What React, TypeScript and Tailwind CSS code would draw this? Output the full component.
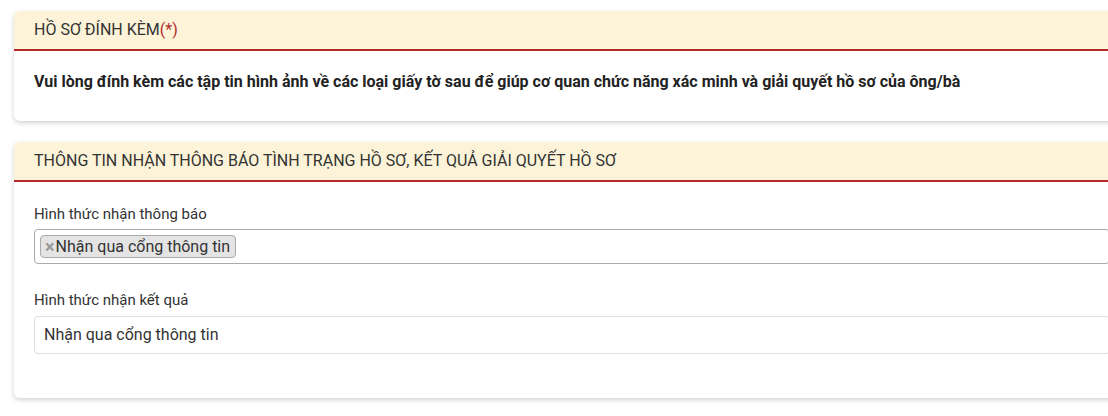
function SectionHeader({ children }: { children: React.ReactNode }) {
  return (
    <div className="h-[40px] flex items-center px-5 bg-[#fcf3d8] border-b-2 border-[#b52a2a] rounded-t-md text-[16px] text-[#333] uppercase">
      {children}
    </div>
  );
}

export default function App() {
  return (
    <div className="w-[1108px] h-[416px] overflow-hidden bg-white font-['Roboto',sans-serif]">
      <div className="w-[1130px] pl-[14px] pt-[11px]">
        <div className="rounded-md bg-white shadow-[0_2px_5px_rgba(0,0,0,0.18)]">
          <SectionHeader>
            Hồ sơ đính kèm<span className="text-[#b52a2a]">(*)</span>
          </SectionHeader>
          <div className="px-5 pt-[21px] h-[70px]">
            <p className="text-[16px] leading-5 font-bold text-[#222]">
              Vui lòng đính kèm các tập tin hình ảnh về các loại giấy tờ sau để giúp cơ quan chức năng xác minh và giải quyết hồ sơ của ông/bà
            </p>
          </div>
        </div>

        <div className="mt-[21px] rounded-md bg-white shadow-[0_2px_5px_rgba(0,0,0,0.18)]">
          <SectionHeader>
            Thông tin nhận thông báo tình trạng hồ sơ, kết quả giải quyết hồ sơ
          </SectionHeader>
          <div className="px-5 pt-[22px] h-[216px]">
            <label className="block text-[15px] leading-5 text-[#333]">Hình thức nhận thông báo</label>
            <div className="mt-[5px] h-[35px] flex items-center px-[5px] border border-[#aaa] rounded-[4px] bg-white">
              <span className="h-[23px] flex items-center pl-[4px] pr-[5px] bg-[#e4e4e4] border border-[#aaa] rounded-[4px] text-[16px] text-[#333]">
                <span className="mr-[1px] text-[18px] font-bold text-[#999] leading-none">×</span>
                Nhận qua cổng thông tin
              </span>
            </div>
            <label className="block mt-[26px] text-[15px] leading-5 text-[#333]">Hình thức nhận kết quả</label>
            <div className="mt-[6px] h-[38px] flex items-center px-[9px] border border-[#ddd] rounded-[4px] bg-white text-[16px] text-[#333]">
              Nhận qua cổng thông tin
            </div>
          </div>
        </div>
      </div>
    </div>
  );
}
